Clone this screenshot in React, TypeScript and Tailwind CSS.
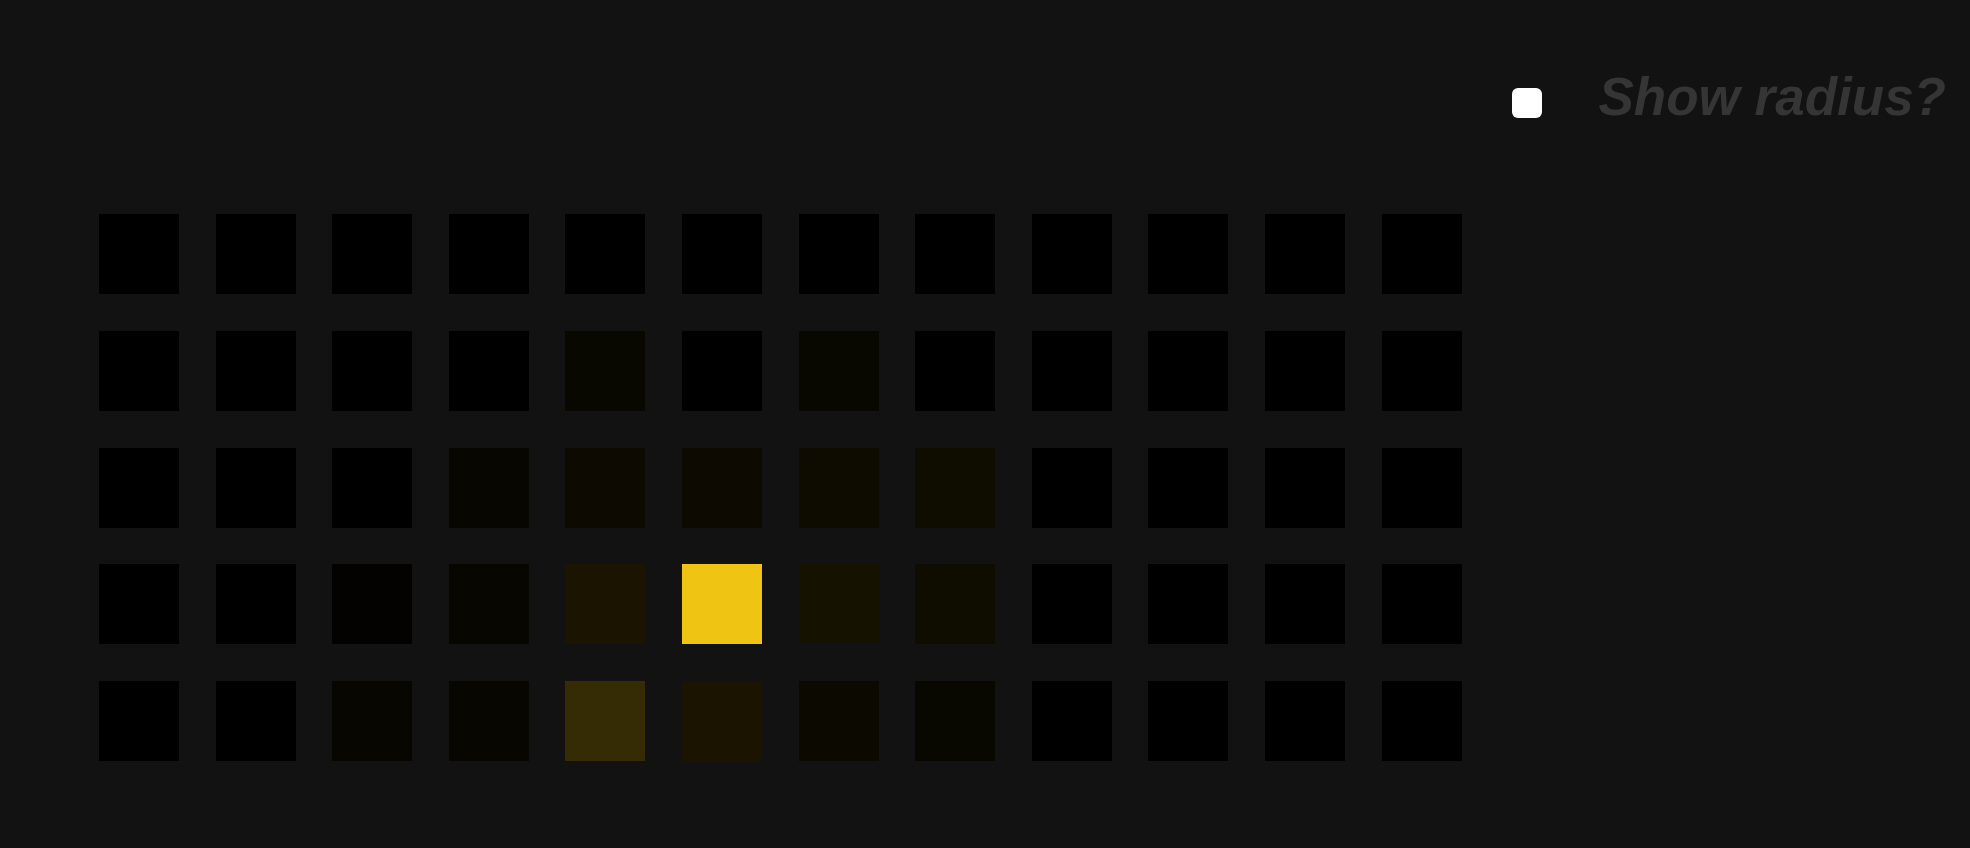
const B = "#000000"

const rows: string[][] = [
  [B, B, B, B, B, B, B, B, B, B, B, B],
  [B, B, B, B, "#080700", B, "#080700", B, B, B, B, B],
  [B, B, B, "#070600", "#0d0a02", "#0d0a02", "#0e0c00", "#0f0c00", B, B, B, B],
  [B, B, "#030200", "#070600", "#1a1400", "#f0c412", "#161200", "#0f0c00", B, B, B, B],
  [B, B, "#070600", "#070600", "#352c06", "#1a1400", "#0c0900", "#080700", B, B, B, B],
]

export default function App() {
  return (
    <div className="min-h-screen bg-[#121212] font-['Liberation_Sans',Arial,sans-serif]">
      <div className="flex justify-end items-start pr-[24px] pt-[70px]">
        <span className="mt-[18px] block h-[30px] w-[30px] rounded-[6px] bg-white" />
        <span className="ml-[57px] text-[53px] leading-none font-bold italic text-[#353535]">
          Show radius?
        </span>
      </div>
      <div className="ml-[99px] mt-[91px] grid w-max grid-cols-[repeat(12,80px)] gap-x-[36.6px] gap-y-[36.75px]">
        {rows.flatMap((row, r) =>
          row.map((color, c) => (
            <div key={`${r}-${c}`} className="h-20 w-20" style={{ backgroundColor: color }} />
          )),
        )}
      </div>
    </div>
  )
}
